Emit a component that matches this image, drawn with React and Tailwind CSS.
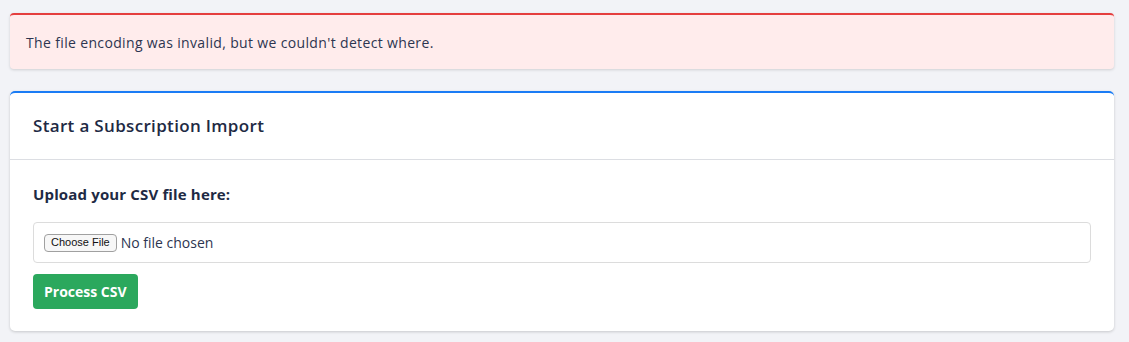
export default function App() {
  return (
    <div className="min-h-[342px] bg-[#f2f3f7] pt-[13px] pl-[10px] pr-[15px] font-['Open_Sans',sans-serif] text-[#1e2a44]">
      <div className="rounded-[4px] border-t-2 border-[#e53e3e] bg-[#ffecec] shadow-[0_1px_3px_rgba(0,0,0,0.15)] h-[56px] flex items-center px-[16px]">
        <p className="text-[14px] tracking-[0.35px] text-[#2d3550]">The file encoding was invalid, but we couldn't detect where.</p>
      </div>

      <div className="mt-[22px] rounded-[5px] border-t-2 border-[#1a7cf5] bg-white shadow-[0_1px_3px_rgba(0,0,0,0.18)]">
        <div className="h-[67px] flex items-center px-[23px] border-b border-[#dcdee3]">
          <h2 className="text-[17px] font-semibold tracking-[0.33px]">Start a Subscription Import</h2>
        </div>
        <div className="px-[23px] pt-[24px] pb-[22px]">
          <label className="block text-[15px] font-bold leading-[20px] tracking-[0.15px]">Upload your CSV file here:</label>
          <div className="mt-[18px] h-[41px] border border-[#dcdcdc] rounded-[4px] flex items-center pl-[10px]">
            <span className="h-[18px] px-[6px] flex items-center border border-[#a0a0a0] rounded-[4px] bg-[#f7f7f7] text-[11px] font-['Liberation_Sans',sans-serif] text-[#111]">
              Choose File
            </span>
            <span className="ml-[4px] text-[14px] text-[#2d3550]">No file chosen</span>
          </div>
          <button className="mt-[11px] h-[35px] px-[11px] rounded-[4px] bg-[#2ba85d] text-white text-[14px] font-bold">
            Process CSV
          </button>
        </div>
      </div>
    </div>
  );
}
